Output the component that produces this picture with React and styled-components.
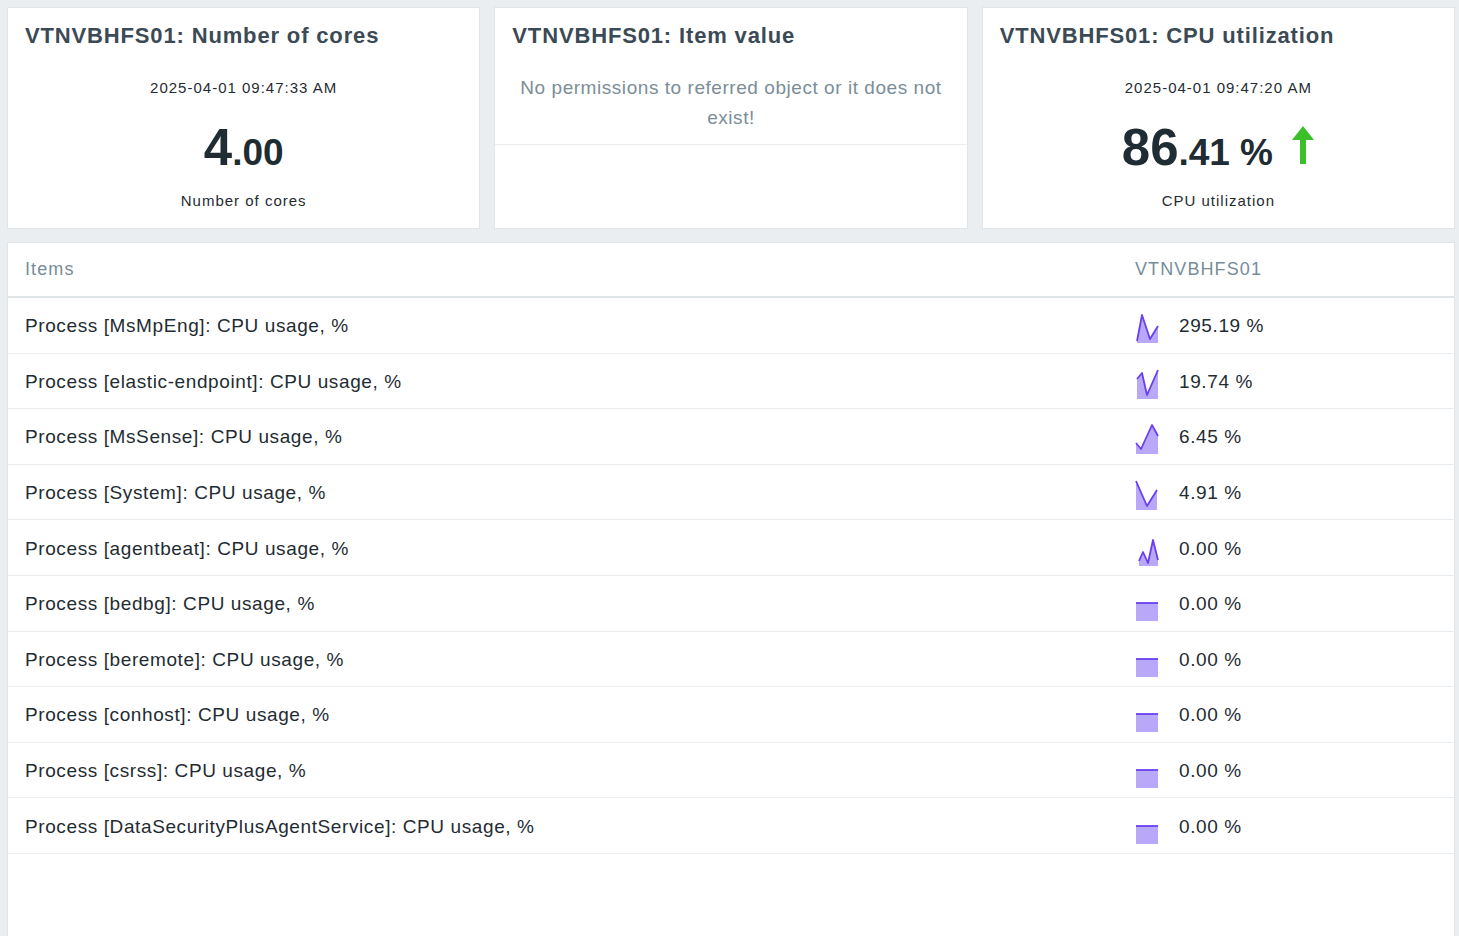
import React from 'react'
import styled, { createGlobalStyle } from 'styled-components'

const GlobalStyle = createGlobalStyle`
  html, body {
    margin: 0;
    padding: 0;
    background: #ebeef0;
    font-family: "Liberation Sans", Arial, sans-serif;
    overflow: hidden;
  }
`

const Page = styled.div`
  padding: 8px 5px 0 8px;
  display: flex;
  flex-direction: column;
  gap: 15px;
`

const CardRow = styled.div`
  display: grid;
  grid-template-columns: repeat(3, 1fr);
  gap: 16px;
`

const Card = styled.div`
  background: #fff;
  height: 220px;
  display: flex;
  flex-direction: column;
  box-shadow: 0 0 0 1px #e1e5e8;
`

const CardTitle = styled.div`
  padding: 15px 17px 0;
  font-size: 22px;
  line-height: 26px;
  font-weight: bold;
  letter-spacing: 0.85px;
  color: #3b4a55;
  white-space: nowrap;
`

const CardBody = styled.div`
  display: flex;
  flex-direction: column;
  align-items: center;
  padding-top: 29px;
  color: #1f2c33;
`

const Stamp = styled.div`
  font-size: 15px;
  line-height: 20px;
  letter-spacing: 1px;
`

const BigValue = styled.div`
  display: flex;
  align-items: baseline;
  margin-top: 22px;
  height: 56px;
  line-height: 56px;
  font-weight: bold;
  color: #1f2c33;
`

const Whole = styled.span`
  font-size: 51px;
`

const Fraction = styled.span`
  font-size: 37px;
`

const Units = styled.span`
  font-size: 37px;
  margin-left: 10px;
`

const Trend = styled.svg`
  margin-left: 18px;
  align-self: center;
  margin-top: -6px;
`

const Caption = styled.div`
  margin-top: 15px;
  font-size: 15px;
  line-height: 20px;
  letter-spacing: 1px;
`

const Notice = styled.div`
  margin-top: 24px;
  padding: 0 24px;
  height: 71px;
  border-bottom: 1px solid #ebeef0;
  text-align: center;
  font-size: 19px;
  line-height: 30px;
  letter-spacing: 0.55px;
  color: #7b8d99;
`

const Panel = styled.div`
  background: #fff;
  height: 720px;
  box-shadow: 0 0 0 1px #e1e5e8;
`

const Grid = styled.div`
  display: grid;
  grid-template-columns: 1110px 1fr;
`

const HeadCell = styled.div`
  height: 53px;
  padding: 0 17px;
  display: flex;
  align-items: center;
  border-bottom: 2px solid #dfe4e7;
  font-size: 18px;
  letter-spacing: 1.1px;
  color: #768d99;
`

const Cell = styled.div`
  height: 55.6px;
  box-sizing: border-box;
  padding: 2px 17px 0;
  display: flex;
  align-items: center;
  gap: 19px;
  border-bottom: 1px solid #ebeef0;
  font-size: 19px;
  letter-spacing: 0.6px;
  color: #1f2c33;
  white-space: nowrap;
`

const Spark = styled.svg`
  flex: none;
  margin-top: 4px;
`

function Sparkline({ points }) {
  const line = points.map(p => p.join(',')).join(' ')
  const first = points[0]
  const last = points[points.length - 1]
  const area = `${first[0]},30 ${line} ${last[0]},30`
  return (
    <Spark width="25" height="30" viewBox="0 0 25 30">
      <polygon points={area} fill="#b9a7f7" />
      <polyline points={line} fill="none" stroke="#6a3fee" strokeWidth="1.8" strokeLinejoin="round" />
    </Spark>
  )
}

const flat = [[1, 12], [23, 12]]

const rows = [
  { name: 'Process [MsMpEng]: CPU usage, %', value: '295.19 %', spark: [[2, 28], [7, 2], [15, 26], [23, 13]] },
  { name: 'Process [elastic-endpoint]: CPU usage, %', value: '19.74 %', spark: [[2, 10], [7, 4], [12, 26], [23, 1]] },
  { name: 'Process [MsSense]: CPU usage, %', value: '6.45 %', spark: [[1, 19], [6, 25], [17, 1], [23, 12]] },
  { name: 'Process [System]: CPU usage, %', value: '4.91 %', spark: [[1, 1], [12, 26], [22, 10]] },
  { name: 'Process [agentbeat]: CPU usage, %', value: '0.00 %', spark: [[4, 25], [8, 16], [13, 27], [18, 4], [23, 24]] },
  { name: 'Process [bedbg]: CPU usage, %', value: '0.00 %', spark: flat },
  { name: 'Process [beremote]: CPU usage, %', value: '0.00 %', spark: flat },
  { name: 'Process [conhost]: CPU usage, %', value: '0.00 %', spark: flat },
  { name: 'Process [csrss]: CPU usage, %', value: '0.00 %', spark: flat },
  { name: 'Process [DataSecurityPlusAgentService]: CPU usage, %', value: '0.00 %', spark: flat },
]

export default function App() {
  return (
    <>
      <GlobalStyle />
      <Page>
        <CardRow>
          <Card>
            <CardTitle>VTNVBHFS01: Number of cores</CardTitle>
            <CardBody>
              <Stamp>2025-04-01 09:47:33 AM</Stamp>
              <BigValue>
                <Whole>4</Whole>
                <Fraction>.00</Fraction>
              </BigValue>
              <Caption>Number of cores</Caption>
            </CardBody>
          </Card>
          <Card>
            <CardTitle>VTNVBHFS01: Item value</CardTitle>
            <Notice>No permissions to referred object or it does not exist!</Notice>
          </Card>
          <Card>
            <CardTitle>VTNVBHFS01: CPU utilization</CardTitle>
            <CardBody>
              <Stamp>2025-04-01 09:47:20 AM</Stamp>
              <BigValue>
                <Whole>86</Whole>
                <Fraction>.41</Fraction>
                <Units>%</Units>
                <Trend width="24" height="38" viewBox="0 0 24 38">
                  <polygon points="12,0 23,14 15,14 15,38 9,38 9,14 1,14" fill="#3cc02a" />
                </Trend>
              </BigValue>
              <Caption>CPU utilization</Caption>
            </CardBody>
          </Card>
        </CardRow>
        <Panel>
          <Grid>
            <HeadCell>Items</HeadCell>
            <HeadCell>VTNVBHFS01</HeadCell>
            {rows.map(r => (
              <React.Fragment key={r.name}>
                <Cell>{r.name}</Cell>
                <Cell>
                  <Sparkline points={r.spark} />
                  {r.value}
                </Cell>
              </React.Fragment>
            ))}
          </Grid>
        </Panel>
      </Page>
    </>
  )
}
